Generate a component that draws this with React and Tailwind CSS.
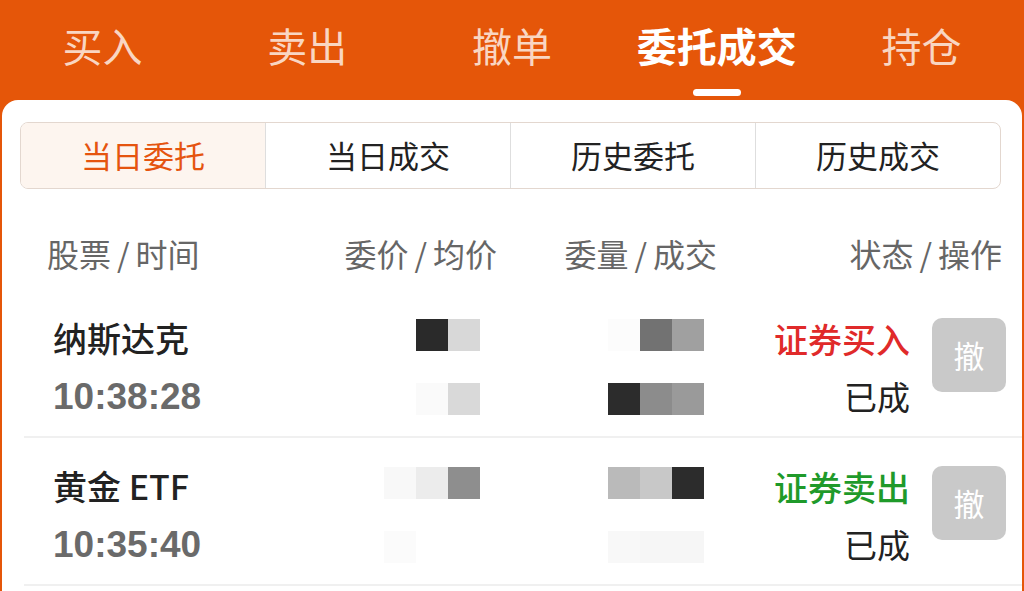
const font = { fontFamily: '"Noto Sans CJK SC", "Liberation Sans", sans-serif' };

const topTabs = ['买入', '卖出', '撤单', '委托成交', '持仓'];
const subTabs = ['当日委托', '当日成交', '历史委托', '历史成交'];
const headers = [
    ['股票', '时间', 'w-[250px]'],
    ['委价', '均价', 'w-[200px] justify-end'],
    ['委量', '成交', 'w-[220px] justify-end'],
    ['状态', '操作', 'flex-1 justify-end'],
];

// pixelated (censored) cells, 32px each
function Mosaic({ cells }) {
    return (
        <div className="flex h-8">
            {cells.map((c, i) => (
                <div key={i} className="w-8 h-8" style={{ background: c }} />
            ))}
        </div>
    );
}

const rows = [
    {
        name: '纳斯达克',
        time: '10:38:28',
        price: [['#ffffff', '#2a2a2a', '#d8d8d8'], ['#ffffff', '#fafafa', '#d9d9d9']],
        vol: [['#fcfcfc', '#727272', '#a0a0a0'], ['#2c2c2c', '#8c8c8c', '#9a9a9a']],
        side: '证券买入',
        sideColor: 'text-[#e02a2a]',
    },
    {
        name: '黄金 ETF',
        time: '10:35:40',
        price: [['#f8f8f8', '#ececec', '#8e8e8e'], ['#fbfbfb', '#ffffff', '#ffffff']],
        vol: [['#bababa', '#c8c8c8', '#2c2c2c'], ['#f8f8f8', '#f6f6f6', '#f6f6f6']],
        side: '证券卖出',
        sideColor: 'text-[#1f9a2a]',
    },
];

export default function App() {
    return (
        <div className="w-[1024px] h-[591px] overflow-hidden bg-[#e55609]" style={font}>
            {/* Top tabs */}
            <div className="h-[100px] flex">
                {topTabs.map((t, i) => (
                    <div key={t} className="flex-1 flex flex-col items-center">
                        <div
                            className={
                                i === 3
                                    ? 'mt-[18px] h-[54px] leading-[54px] text-[40px] font-semibold text-white'
                                    : 'mt-[18px] h-[54px] leading-[54px] text-[40px] text-[#f9d6c2]'
                            }
                        >
                            {t}
                        </div>
                        {i === 3 && <div className="mt-[17px] w-12 h-[7px] rounded-full bg-white" />}
                    </div>
                ))}
            </div>

            {/* Card */}
            <div className="mx-[2px] h-[491px] bg-white rounded-t-[16px]">
                <div className="pt-[22px] pl-[18px] pr-[21px]">
                    <div className="h-[67px] flex rounded-[8px] border border-[#e3d7cf] overflow-hidden">
                        {subTabs.map((t, i) => (
                            <div
                                key={t}
                                className={
                                    i === 0
                                        ? 'flex-1 flex items-center justify-center text-[31px] text-[#e5540f] bg-[#fdf5ef]'
                                        : 'flex-1 flex items-center justify-center text-[31px] text-[#222] border-l border-[#dedede]'
                                }
                            >
                                {t}
                            </div>
                        ))}
                    </div>
                </div>

                {/* Column headers */}
                <div className="mt-[42px] h-[44px] flex items-center text-[32px] text-[#666] pl-[45px] pr-[20px]">
                    {headers.map(([a, b, cls]) => (
                        <div key={a} className={`flex ${cls}`}>
                            <span>{a}</span>
                            <span className="mx-[6px]">/</span>
                            <span>{b}</span>
                        </div>
                    ))}
                </div>

                {/* Rows */}
                <div className="mt-[15px] ml-[22px]">
                    {rows.map((r) => (
                        <div key={r.time} className="h-[148px] pt-2 flex items-center border-b-2 border-[#f0f0f0]">
                            <div className="w-[330px] pl-[29px] flex flex-col gap-[13px]">
                                <div className="text-[34px] leading-[46px] font-medium text-[#222]">{r.name}</div>
                                <div className="text-[37px] leading-[46px] font-bold text-[#6a6a6a]" style={{ fontFamily: '"Liberation Sans", sans-serif' }}>
                                    {r.time}
                                </div>
                            </div>
                            <div className="w-[126px] flex flex-col items-end gap-8">
                                <Mosaic cells={r.price[0]} />
                                <Mosaic cells={r.price[1]} />
                            </div>
                            <div className="w-[224px] flex flex-col items-end gap-8">
                                <Mosaic cells={r.vol[0]} />
                                <Mosaic cells={r.vol[1]} />
                            </div>
                            <div className="w-[206px] flex flex-col items-end gap-[11px]">
                                <div className={`text-[34px] leading-[46px] font-medium ${r.sideColor}`}>{r.side}</div>
                                <div className="text-[33px] leading-[46px] text-[#222]">已成</div>
                            </div>
                            <div className="ml-[22px] w-[74px] h-[74px] -mt-[24px] rounded-[10px] bg-[#c9c9c9] flex items-center justify-center text-[31px] text-white">
                                撤
                            </div>
                        </div>
                    ))}
                </div>
            </div>
        </div>
    );
}
